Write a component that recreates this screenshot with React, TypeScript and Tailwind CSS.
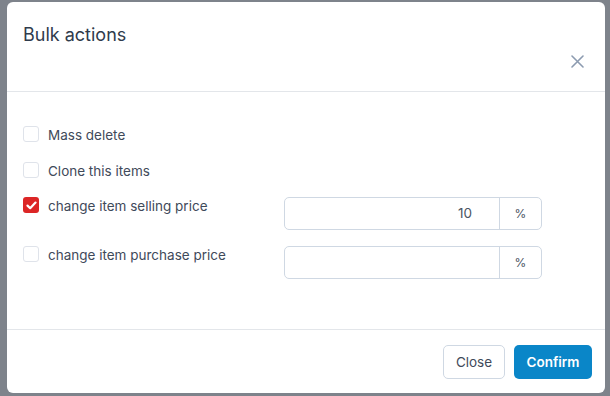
import React from "react";

const font = { fontFamily: "Inter, 'Noto Sans', sans-serif" };

function Checkbox({ checked }: { checked?: boolean }) {
  if (checked) {
    return (
      <span className="flex h-4 w-4 shrink-0 items-center justify-center rounded-[3px] bg-[#dc2626]">
        <svg width="11" height="9" viewBox="0 0 11 9" fill="none">
          <path d="M1.5 4.6 L4.2 7.2 L9.5 1.6" stroke="white" strokeWidth="2.2" strokeLinecap="round" strokeLinejoin="round" />
        </svg>
      </span>
    );
  }
  return <span className="block h-4 w-4 shrink-0 rounded-[3px] border border-[#dfe3ea] bg-white" />;
}

function PctInput({ value }: { value?: string }) {
  return (
    <div className="flex h-[33px] w-[258px] rounded-[5px] border border-[#cfd8e3] bg-white">
      <div className="flex flex-1 items-center justify-end pr-[27px] text-[13.5px] text-[#4b5563]">{value}</div>
      <div className="flex w-[42px] items-center justify-center border-l border-[#cfd8e3] text-[12px] text-[#4b5563]">%</div>
    </div>
  );
}

export default function App() {
  return (
    <div className="h-[396px] w-[610px] overflow-hidden bg-[#7e838b] pl-[7px] pt-[2px]" style={font}>
      <div className="flex h-[391px] w-[598px] flex-col rounded-[6px] bg-white">
        <div className="relative h-[90px] border-b border-[#e3e6ea] pl-[16px] pt-[22px]">
          <div className="text-[18px] leading-[22px] text-[#2f3b4c]">Bulk actions</div>
          <svg className="absolute left-[564px] top-[53px]" width="13" height="13" viewBox="0 0 13 13" fill="none">
            <path d="M1 1 L12 12 M12 1 L1 12" stroke="#8c9bb0" strokeWidth="1.6" strokeLinecap="round" />
          </svg>
        </div>
        <div className="flex flex-1 flex-col pl-[16px] pt-[34px]">
          <div className="flex h-9 items-start gap-[9px]">
            <Checkbox />
            <span className="text-[13.5px] leading-[18px] text-[#3f4a5a]">Mass delete</span>
          </div>
          <div className="flex h-[35px] items-start gap-[9px]">
            <Checkbox />
            <span className="text-[13.5px] leading-[18px] text-[#3f4a5a]">Clone this items</span>
          </div>
          <div className="flex items-start">
            <div className="flex w-[261px] items-start gap-[9px]">
              <Checkbox checked />
              <span className="text-[13.5px] leading-[18px] text-[#3f4a5a]">change item selling price</span>
            </div>
            <PctInput value="10" />
          </div>
          <div className="mt-4 flex items-start">
            <div className="flex w-[261px] items-start gap-[9px]">
              <Checkbox />
              <span className="text-[13.5px] leading-[18px] text-[#3f4a5a]">change item purchase price</span>
            </div>
            <PctInput />
          </div>
        </div>
        <div className="flex h-[64px] items-start justify-end gap-[9px] border-t border-[#e3e6ea] pr-[13px] pt-[15px]">
          <button className="h-[34px] w-[62px] rounded-[5px] border border-[#cfd8e3] bg-white text-[13.5px] text-[#3f4a5a]">Close</button>
          <button className="h-[34px] w-[78px] rounded-[5px] bg-[#0a86c8] text-[13.5px] font-semibold text-white">Confirm</button>
        </div>
      </div>
    </div>
  );
}
